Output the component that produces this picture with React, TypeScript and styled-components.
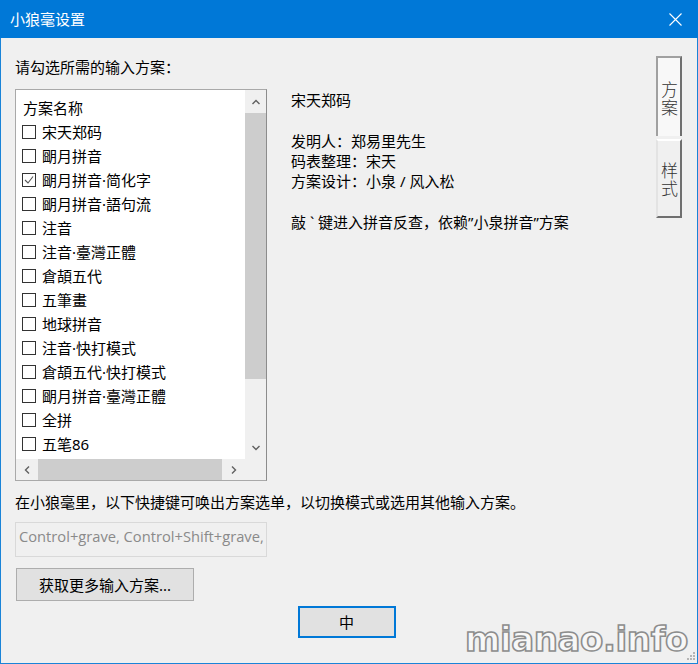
import React from 'react';
import styled, { createGlobalStyle } from 'styled-components';

const GlobalStyle = createGlobalStyle`
  html, body {
    margin: 0;
    padding: 0;
    background: #ffffff;
  }
  * {
    box-sizing: border-box;
  }
`;

const uiFont = `"Noto Sans", "Noto Sans CJK SC", sans-serif`;

const Window = styled.div`
  width: 698px;
  height: 664px;
  display: flex;
  flex-direction: column;
  font-family: ${uiFont};
  font-size: 15px;
  color: #000;
  position: relative;
  overflow: hidden;
`;

const TitleBar = styled.div`
  height: 38px;
  flex-shrink: 0;
  background: #0078d7;
  color: #fff;
  display: flex;
  align-items: center;
  justify-content: space-between;
  padding: 0 16px 0 10px;
  line-height: 20px;
`;

const CloseIcon = styled.svg`
  width: 13px;
  height: 13px;
`;

const Body = styled.div`
  flex: 1;
  background: #f0f0f0;
  border: 1px solid #1a84d8;
  border-top: none;
  display: flex;
  flex-direction: column;
  position: relative;
`;

const Top = styled.div`
  display: flex;
`;

const Main = styled.div`
  flex: 1;
  padding: 19px 0 0 14px;
  display: flex;
  flex-direction: column;
`;

const Label = styled.div`
  line-height: 20px;
  white-space: nowrap;
`;

const Row = styled.div`
  display: flex;
  margin-top: 12px;
`;

const ListBox = styled.div`
  width: 252px;
  height: 392px;
  flex-shrink: 0;
  background: #fff;
  border: 1px solid #a9a9a9;
  border-right-color: #8c8c8c;
  display: grid;
  grid-template-columns: 1fr 21px;
  grid-template-rows: 1fr 21px;
  overflow: hidden;
`;

const Viewport = styled.div`
  overflow: hidden;
  padding-top: 6px;
`;

const HeaderCell = styled.div`
  height: 24px;
  line-height: 24px;
  padding-left: 7px;
  white-space: nowrap;
`;

const Item = styled.div`
  height: 24px;
  display: flex;
  align-items: center;
  gap: 6px;
  padding-left: 6px;
  white-space: nowrap;
  line-height: 20px;
`;

const CheckBox = styled.span`
  width: 14px;
  height: 14px;
  flex-shrink: 0;
  border: 1px solid #333;
  background: #fff;
  display: flex;
  align-items: center;
  justify-content: center;
`;

const VScroll = styled.div`
  background: #f0f0f0;
  display: flex;
  flex-direction: column;
`;

const HScroll = styled.div`
  background: #f0f0f0;
  display: flex;
`;

const Corner = styled.div`
  background: #f0f0f0;
`;

const Arrow = styled.div<{ $size: number }>`
  flex: 0 0 ${p => p.$size}px;
  display: flex;
  align-items: center;
  justify-content: center;
`;

const Thumb = styled.div<{ $len: number }>`
  flex: 0 0 ${p => p.$len}px;
  background: #cdcdcd;
`;

const Track = styled.div`
  flex: 1;
`;

const Details = styled.div`
  margin-left: 24px;
  padding-top: 1px;
  line-height: 20.3px;
  white-space: pre-line;
`;

const ShortcutNote = styled.div`
  margin-top: 11px;
  line-height: 20px;
  white-space: nowrap;
`;

const ShortcutField = styled.div`
  margin-top: 10px;
  width: 252px;
  height: 35px;
  border: 1px solid #d9d9d9;
  background: #f0f0f0;
  color: #8a8a8a;
  font-family: "Open Sans", "Noto Sans", sans-serif;
  font-size: 14.7px;
  line-height: 20px;
  padding: 3px 0 0 3px;
  white-space: nowrap;
  overflow: hidden;
`;

const Button = styled.button<{ $focused?: boolean }>`
  font-family: ${uiFont};
  font-size: 15px;
  color: #000;
  background: #e1e1e1;
  border: ${p => (p.$focused ? '2px solid #0078d7' : '1px solid #adadad')};
  padding: 0;
  line-height: 20px;
  cursor: default;
`;

const MoreButton = styled(Button)`
  margin-top: 11px;
  margin-left: 1px;
  width: 178px;
  height: 33px;
`;

const Footer = styled.div`
  display: flex;
  justify-content: center;
  padding: 5px 19px 0 14px;
`;

const OkButton = styled(Button)`
  width: 98px;
  height: 32px;
`;

const Tabs = styled.div`
  display: flex;
  flex-direction: column;
  gap: 3px;
  padding: 18px 15px 0 0;
`;

const Tab = styled.div<{ $active?: boolean }>`
  width: 26px;
  height: ${p => (p.$active ? 80 : 79)}px;
  display: flex;
  align-items: center;
  justify-content: center;
  font-family: "Noto Sans CJK SC", serif;
  font-weight: 300;
  font-size: 17px;
  line-height: 20px;
  letter-spacing: 1px;
  writing-mode: vertical-rl;
  text-orientation: upright;
  color: #333;
  background: ${p => (p.$active ? '#f8f8f8' : '#f0f0f0')};
  border-top: 2px solid ${p => (p.$active ? '#a0a0a0' : '#ffffff')};
  border-left: 2px solid ${p => (p.$active ? '#a0a0a0' : '#e3e3e3')};
  border-right: 2px solid #6f6f6f;
  border-bottom: ${p => (p.$active ? 'none' : '2px solid #6f6f6f')};
  padding-top: ${p => (p.$active ? 4 : 2)}px;
`;

const Watermark = styled.div`
  position: absolute;
  right: 9px;
  bottom: 4px;
  font-family: "DejaVu Sans", sans-serif;
  font-weight: bold;
  font-size: 34px;
  line-height: 40px;
  color: #f7f7f7;
  -webkit-text-stroke: 1.6px #8d8d8d;
  letter-spacing: -0.4px;
  pointer-events: none;
`;

const Grip = styled.svg`
  position: absolute;
  right: 1px;
  bottom: 2px;
  width: 9px;
  height: 9px;
`;

const schemes: { name: string; checked?: boolean }[] = [
  { name: '宋天郑码' },
  { name: '朙月拼音' },
  { name: '朙月拼音·简化字', checked: true },
  { name: '朙月拼音·語句流' },
  { name: '注音' },
  { name: '注音·臺灣正體' },
  { name: '倉頡五代' },
  { name: '五筆畫' },
  { name: '地球拼音' },
  { name: '注音·快打模式' },
  { name: '倉頡五代·快打模式' },
  { name: '朙月拼音·臺灣正體' },
  { name: '全拼' },
  { name: '五笔86' },
];

const Chevron: React.FC<{ dir: 'up' | 'down' | 'left' | 'right' }> = ({ dir }) => {
  const rot = { up: 0, right: 90, down: 180, left: 270 }[dir];
  return (
    <svg width="10" height="10" viewBox="0 0 10 10" style={{ transform: `rotate(${rot}deg)` }}>
      <polyline points="1.5,7 5,3.5 8.5,7" fill="none" stroke="#606060" strokeWidth="1.4" />
    </svg>
  );
};

const detailText = `宋天郑码

发明人：郑易里先生
码表整理：宋天
方案设计：小泉 / 风入松

敲 ` + '`' + ` 键进入拼音反查，依赖”小泉拼音”方案`;

export default function App() {
  return (
    <Window>
      <GlobalStyle />
      <TitleBar>
        <span>小狼毫设置</span>
        <CloseIcon viewBox="0 0 13 13">
          <path d="M0.5 0.5 L12.5 12.5 M12.5 0.5 L0.5 12.5" stroke="#fff" strokeWidth="1.1" />
        </CloseIcon>
      </TitleBar>
      <Body>
        <Top>
          <Main>
            <Label>请勾选所需的输入方案：</Label>
            <Row>
              <ListBox>
                <Viewport>
                  <HeaderCell>方案名称</HeaderCell>
                  {schemes.map(s => (
                    <Item key={s.name}>
                      <CheckBox>
                        {s.checked && (
                          <svg width="10" height="10" viewBox="0 0 10 10">
                            <polyline points="1,5 4,8 9,1.5" fill="none" stroke="#555" strokeWidth="1.1" />
                          </svg>
                        )}
                      </CheckBox>
                      <span>{s.name}</span>
                    </Item>
                  ))}
                </Viewport>
                <VScroll>
                  <Arrow $size={23}><Chevron dir="up" /></Arrow>
                  <Thumb $len={266} />
                  <Track />
                  <Arrow $size={23}><Chevron dir="down" /></Arrow>
                </VScroll>
                <HScroll>
                  <Arrow $size={22}><Chevron dir="left" /></Arrow>
                  <Thumb $len={184} />
                  <Track />
                  <Arrow $size={23}><Chevron dir="right" /></Arrow>
                </HScroll>
                <Corner />
              </ListBox>
              <Details>{detailText}</Details>
            </Row>
            <ShortcutNote>在小狼毫里，以下快捷键可唤出方案选单，以切换模式或选用其他输入方案。</ShortcutNote>
            <ShortcutField>Control+grave, Control+Shift+grave,</ShortcutField>
            <MoreButton>获取更多输入方案...</MoreButton>
          </Main>
          <Tabs>
            <Tab $active>方案</Tab>
            <Tab>样式</Tab>
          </Tabs>
        </Top>
        <Footer>
          <OkButton $focused>中</OkButton>
        </Footer>
        <Watermark>mianao.info</Watermark>
        <Grip viewBox="0 0 9 9">
          <rect x="6" y="0" width="2" height="2" fill="#b5b5b5" />
          <rect x="3" y="3" width="2" height="2" fill="#b5b5b5" />
          <rect x="6" y="3" width="2" height="2" fill="#b5b5b5" />
          <rect x="0" y="6" width="2" height="2" fill="#b5b5b5" />
          <rect x="3" y="6" width="2" height="2" fill="#b5b5b5" />
          <rect x="6" y="6" width="2" height="2" fill="#b5b5b5" />
        </Grip>
      </Body>
    </Window>
  );
}
